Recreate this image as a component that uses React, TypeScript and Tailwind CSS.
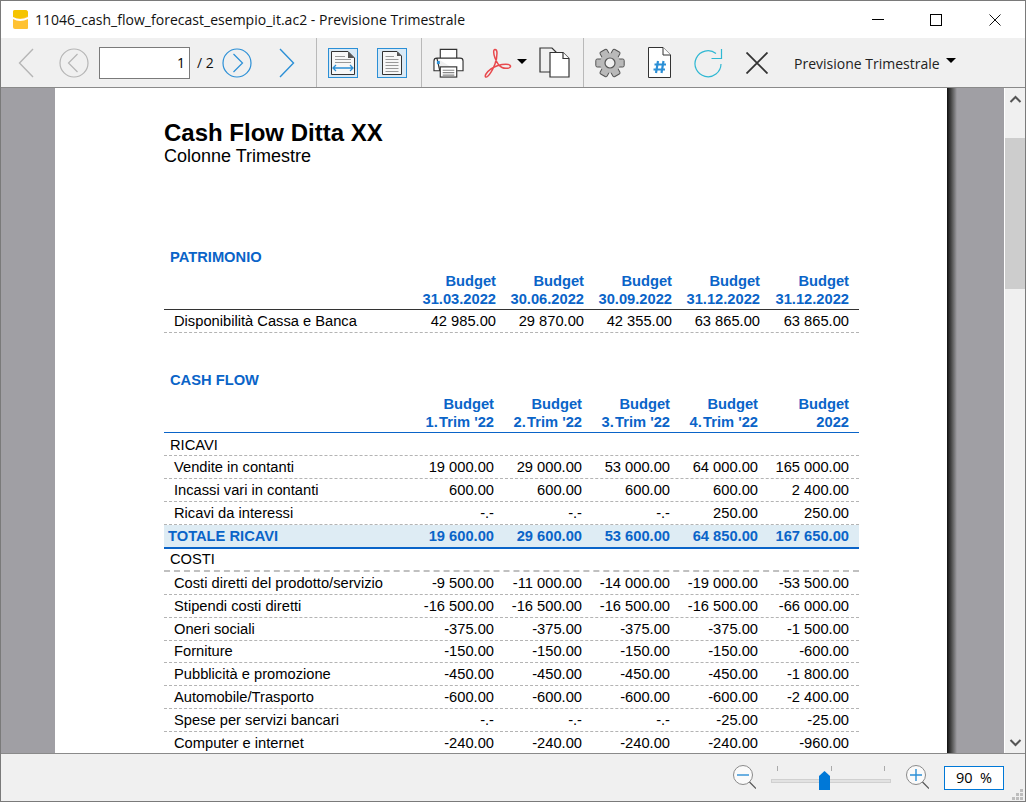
import React from "react";

function Chevron({ dir, color, className }: { dir: "l" | "r"; color: string; className: string }) {
  return (
    <svg width="16" height="30" viewBox="0 0 16 30" className={className} fill="none" stroke={color} strokeWidth="1.4">
      <path d={dir === "l" ? "M15 1 L1.5 15 L15 29" : "M1 1 L14.5 15 L1 29"} />
    </svg>
  );
}

function CircleChev({ dir, color, className }: { dir: "l" | "r"; color: string; className: string }) {
  return (
    <svg width="30" height="30" viewBox="0 0 30 30" className={className} fill="none" stroke={color} strokeWidth="1.2">
      <circle cx="15" cy="15" r="14" />
      <path d={dir === "l" ? "M18.5 6 L9.5 15 L18.5 24" : "M11.5 6 L20.5 15 L11.5 24"} />
    </svg>
  );
}

function Sep({ className }: { className: string }) {
  return <div className={`w-px self-stretch bg-[#b9b9b9] ${className}`} />;
}

function Logo() {
  return (
    <svg width="17" height="21" viewBox="0 0 17 21" className="ml-[11px] shrink-0">
      <path d="M1 3 Q1 1 3 1 L13 1 Q16 1 16 4 L16 19 Q16 20 15 20 L3 20 Q1 20 1 18 Z" fill="#ffc233" />
      <path d="M1 3 Q1 1 3 1 L13 1 Q16 1 16 4 L16 7 Q8 11 1 8 Z" fill="#f5c400" />
      <path d="M1 8 Q8 12 16 8 L16 10 Q8 14 1 10 Z" fill="#ffffff" />
    </svg>
  );
}

function PageFit() {
  return (
    <svg width="30" height="30" viewBox="0 0 30 30" className="ml-[11px] bg-[#d9e9f5]" fill="none">
      <rect x="0.5" y="0.5" width="29" height="29" stroke="#2b8fd6" />
      <path d="M3.5 3.5 H20 L26.5 10 V26.5 H3.5 Z" fill="#f7f7f7" stroke="#333" />
      <path d="M20 3.5 V10 H26.5 Z" fill="#555" />
      <path d="M7 8.5 H17 M7 11.5 H23 M7 14.5 H23" stroke="#999" />
      <path d="M5 20 H25 M8 17 L5 20 L8 23 M22 17 L25 20 L22 23" stroke="#2b8fd6" strokeWidth="1.3" />
    </svg>
  );
}

function PageFull() {
  return (
    <svg width="30" height="30" viewBox="0 0 30 30" className="ml-[19px] bg-[#d9e9f5]" fill="none">
      <rect x="0.5" y="0.5" width="29" height="29" stroke="#2b8fd6" />
      <path d="M5.5 3.5 H20 L24.5 8 V26.5 H5.5 Z" fill="#f7f7f7" stroke="#333" />
      <path d="M20 3.5 V8 H24.5 Z" fill="#555" />
      <path d="M8.5 8.5 H17 M8.5 11.5 H21.5 M8.5 14.5 H21.5 M8.5 17.5 H21.5 M8.5 20.5 H21.5 M8.5 23.5 H21.5" stroke="#999" />
    </svg>
  );
}

function Printer() {
  return (
    <svg width="31" height="30" viewBox="0 0 32 30" className="ml-[11px]" fill="none" stroke="#333" strokeWidth="1.2">
      <path d="M7.5 10 V1 H24.5 V10" fill="#fff" />
      <path d="M4 10 H28 Q31 10 31 13 V23 H25 M7 23 H1 V13 Q1 10 4 10 Z" fill="#fff" />
      <rect x="7.5" y="19" width="17" height="10.5" fill="#fff" />
      <path d="M10 22.5 H22 M10 25 H22 M10 27.5 H22" stroke="#888" />
      <rect x="4" y="13" width="3" height="3" fill="#2b8fd6" stroke="none" />
    </svg>
  );
}

function Pdf() {
  return (
    <svg width="28" height="30" viewBox="0 0 28 30" className="ml-[20px]" fill="none" stroke="#e8494d" strokeWidth="1.5">
      <path d="M11 1.5 C9 1.5 9.5 6 11 10 C12.5 14 15 18 18 19.5 C21 21 27 20.5 26.5 18 C26 15.5 19 16 14 17.5 C9 19 4 23 2 26 C0.5 28.5 1.5 30 3.5 28.5 C6 26.5 9 21 11 16 C12.5 12 13 8 13 5 C13 3 12.5 1.5 11 1.5 Z" />
    </svg>
  );
}

function Caret({ className }: { className: string }) {
  return <div className={`w-0 h-0 border-x-[5px] border-x-transparent border-t-[5px] border-t-black ${className}`} />;
}

function Copy() {
  return (
    <svg width="31" height="31" viewBox="0 0 31 31" className="ml-[12px]" fill="none" stroke="#333" strokeWidth="1.2">
      <path d="M1 1 H13 L17 5 V25 H1 Z" fill="#f0f0f0" />
      <path d="M11 5.5 H24 L30 11.5 V30 H11 Z" fill="#fff" />
      <path d="M24 5.5 V11.5 H30" fill="#fff" />
    </svg>
  );
}

function Gear() {
  const teeth = [30, 90, 150, 210, 270, 330];
  return (
    <svg width="30" height="30" viewBox="0 0 30 30" className="ml-[11px]">
      {teeth.map((a) => (
        <rect key={a} x="11" y="0.8" width="8" height="7" rx="1.5" fill="#b9b9b9" stroke="#555" strokeWidth="1" transform={`rotate(${a} 15 15)`} />
      ))}
      <circle cx="15" cy="15" r="10" fill="#b9b9b9" />
      <circle cx="15" cy="15" r="5" fill="#f0f0f0" stroke="#555" strokeWidth="1.2" />
    </svg>
  );
}

function HashDoc() {
  return (
    <svg width="23" height="31" viewBox="0 0 23 31" className="ml-[23px]" fill="none">
      <path d="M0.5 0.5 H15 L22.5 8 V30.5 H0.5 Z" fill="#fff" stroke="#333" />
      <path d="M15 0.5 V8 H22.5" fill="#fff" stroke="#333" />
      <path d="M10 14 L8 26 M15.5 14 L13.5 26 M6.5 17.5 H18 M5.5 22.5 H17" stroke="#2b8fd6" strokeWidth="2.2" />
    </svg>
  );
}

function Refresh() {
  return (
    <svg width="29" height="30" viewBox="0 0 29 30" className="ml-[23px]" fill="none" stroke="#2fb8d3" strokeWidth="1.2">
      <path d="M27 16 A13 13 0 1 1 22 5.5" />
      <path d="M27.5 1 V10.5 H17.5" />
    </svg>
  );
}

function Cross({ s, w, color, className }: { s: number; w: number; color: string; className: string }) {
  return (
    <svg width={s} height={s} viewBox={`0 0 ${s} ${s}`} className={className} stroke={color} strokeWidth={w}>
      <path d={`M0.5 0.5 L${s - 0.5} ${s - 0.5} M${s - 0.5} 0.5 L0.5 ${s - 0.5}`} />
    </svg>
  );
}

function TitleBar() {
  return (
    <div className="h-[37px] bg-white flex items-center shrink-0">
      <Logo />
      <span className="ml-[6px] text-[14px] text-[#111] whitespace-nowrap font-['Open_Sans',sans-serif] tracking-[0.02px]">
        11046_cash_flow_forecast_esempio_it.ac2 - Previsione Trimestrale
      </span>
      <div className="ml-auto flex items-center">
        <div className="w-3 h-px bg-black" />
        <div className="ml-[46px] w-[12px] h-[12px] border border-black" />
        <Cross s={12} w={1} color="#111" className="ml-[47px] mr-[24px]" />
      </div>
    </div>
  );
}

function Toolbar() {
  return (
    <div className="h-[50px] shrink-0 bg-[#f0f0f0] border-b border-[#8a8a8a] flex items-center">
      <Chevron dir="l" color="#b5b5b5" className="ml-[17px]" />
      <CircleChev dir="l" color="#b5b5b5" className="ml-[25px]" />
      <div className="ml-[10px] w-[91px] h-8 bg-white border border-[#7a7a7a] flex items-center justify-end pr-1 text-[14px] text-black font-['Open_Sans',sans-serif]">
        1
      </div>
      <span className="ml-[7px] w-[18px] whitespace-nowrap text-[14px] text-[#111] font-['Open_Sans',sans-serif]">/ 2</span>
      <CircleChev dir="r" color="#2b8fd6" className="ml-[7px]" />
      <Chevron dir="r" color="#2b8fd6" className="ml-[27px]" />
      <Sep className="ml-[21px]" />
      <PageFit />
      <PageFull />
      <Sep className="ml-[14px]" />
      <Printer />
      <Pdf />
      <Caret className="ml-[5px] -mt-[3px]" />
      <Copy />
      <Sep className="ml-[13px]" />
      <Gear />
      <HashDoc />
      <Refresh />
      <Cross s={22} w={1.8} color="#333" className="ml-[23px]" />
      <span className="ml-[26px] w-[144px] mt-[2px] whitespace-nowrap text-[14px] text-[#222] font-['Open_Sans',sans-serif]">Previsione Trimestrale</span>
      <Caret className="ml-[8px] -mt-1" />
    </div>
  );
}

function Cells({ vals }: { vals: string[] }) {
  return (
    <>
      {vals.map((v, i) => (
        <div key={i} className={`text-right whitespace-nowrap ${i === 4 ? "w-[91px]" : "w-[88px]"}`}>
          {v}
        </div>
      ))}
    </>
  );
}

function Cells1({ vals }: { vals: string[] }) {
  return (
    <>
      {vals.map((v, i) => (
        <div key={i} className={`text-right whitespace-nowrap ${i === 4 ? "w-[89px]" : "w-[88px]"}`}>
          {v}
        </div>
      ))}
    </>
  );
}

function Row({ label, vals, fine }: { label: string; vals: string[]; fine?: boolean }) {
  return (
    <div className={`flex items-center border-b border-dashed border-[#b4b4b4] text-black ${fine ? "h-[22.85px]" : "h-[23px]"}`}>
      <div className="w-[242px] pl-[10px] whitespace-nowrap">{label}</div>
      <Cells vals={vals} />
    </div>
  );
}

const costs: [string, string[]][] = [
  ["Costi diretti del prodotto/servizio", ["-9 500.00", "-11 000.00", "-14 000.00", "-19 000.00", "-53 500.00"]],
  ["Stipendi costi diretti", ["-16 500.00", "-16 500.00", "-16 500.00", "-16 500.00", "-66 000.00"]],
  ["Oneri sociali", ["-375.00", "-375.00", "-375.00", "-375.00", "-1 500.00"]],
  ["Forniture", ["-150.00", "-150.00", "-150.00", "-150.00", "-600.00"]],
  ["Pubblicità e promozione", ["-450.00", "-450.00", "-450.00", "-450.00", "-1 800.00"]],
  ["Automobile/Trasporto", ["-600.00", "-600.00", "-600.00", "-600.00", "-2 400.00"]],
  ["Spese per servizi bancari", ["-.-", "-.-", "-.-", "-25.00", "-25.00"]],
  ["Computer e internet", ["-240.00", "-240.00", "-240.00", "-240.00", "-960.00"]],
];

function Report() {
  return (
    <div className="w-[892px] h-full bg-white shrink-0 overflow-hidden pl-[109px] pt-[32px] font-['Liberation_Sans',Arial,sans-serif] text-[14.7px] leading-[18px]">
      <div className="text-[24px] leading-[26px] font-bold text-black">Cash Flow Ditta XX</div>
      <div className="text-[18px] leading-[20px] text-black">Colonne Trimestre</div>

      <div className="w-[695px] mt-[82px]">
        <div className="pl-[6px] h-[18px] font-bold text-[#0a64c8]">PATRIMONIO</div>
        <div className="mt-[6px] flex font-bold text-[#0a64c8]">
          <div className="w-[244px]" />
          <Cells1 vals={["Budget", "Budget", "Budget", "Budget", "Budget"]} />
        </div>
        <div className="flex font-bold text-[#0a64c8] border-b border-[#333] h-[20px]">
          <div className="w-[244px]" />
          <Cells1 vals={["31.03.2022", "30.06.2022", "30.09.2022", "31.12.2022", "31.12.2022"]} />
        </div>
        <div className="h-[23px] flex items-center border-b border-dashed border-[#b4b4b4] text-black">
          <div className="w-[244px] pl-[10px] whitespace-nowrap">Disponibilità Cassa e Banca</div>
          <Cells1 vals={["42 985.00", "29 870.00", "42 355.00", "63 865.00", "63 865.00"]} />
        </div>

        <div className="mt-[38px] pl-[6px] h-[18px] font-bold text-[#0a64c8]">CASH FLOW</div>
        <div className="mt-[6px] flex font-bold text-[#0a64c8]">
          <div className="w-[242px]" />
          <Cells vals={["Budget", "Budget", "Budget", "Budget", "Budget"]} />
        </div>
        <div className="flex font-bold text-[#0a64c8] h-[20px] border-b border-[#0a64c8]">
          <div className="w-[242px]" />
          <Cells vals={["1.\u200ATrim '22", "2.\u200ATrim '22", "3.\u200ATrim '22", "4.\u200ATrim '22", "2022"]} />
        </div>

        <div className="h-[23px] flex items-center pl-[6px] pt-[2px] border-b border-dashed border-[#b4b4b4] text-black">RICAVI</div>
        <Row label="Vendite in contanti" vals={["19 000.00", "29 000.00", "53 000.00", "64 000.00", "165 000.00"]} />
        <Row label="Incassi vari in contanti" vals={["600.00", "600.00", "600.00", "600.00", "2 400.00"]} />
        <Row label="Ricavi da interessi" vals={["-.-", "-.-", "-.-", "250.00", "250.00"]} />
        <div className="h-[24px] flex items-center bg-[#deecf4] border-b-2 border-[#0a64c8] font-bold text-[#0a64c8]">
          <div className="w-[242px] pl-[4px] whitespace-nowrap">TOTALE RICAVI</div>
          <Cells vals={["19 600.00", "29 600.00", "53 600.00", "64 850.00", "167 650.00"]} />
        </div>
        <div className="h-[23px] flex items-center pl-[6px] pb-[2px] border-b-2 border-dashed border-[#c0c0c0] text-black">COSTI</div>
        {costs.map(([l, v]) => (
          <Row key={l} label={l} vals={v} fine />
        ))}
      </div>
    </div>
  );
}

function Scrollbar() {
  return (
    <div className="w-[21px] h-full bg-[#f0f0f0] border-l border-white flex flex-col items-center shrink-0">
      <svg width="15" height="10" viewBox="0 0 15 10" className="mt-[6px]" fill="none" stroke="#555" strokeWidth="2">
        <path d="M2.5 8 L7.5 3 L12.5 8" />
      </svg>
      <div className="mt-[34px] w-full h-[151px] bg-[#cdcdcd]" />
      <svg width="15" height="10" viewBox="0 0 15 10" className="mt-auto mb-[5px]" fill="none" stroke="#555" strokeWidth="2">
        <path d="M2.5 2 L7.5 7 L12.5 2" />
      </svg>
    </div>
  );
}

function Magnifier({ plus, className }: { plus?: boolean; className: string }) {
  return (
    <svg width="23" height="24" viewBox="0 0 23 24" className={className} fill="none">
      <circle cx="10" cy="10" r="9.5" fill="#fafafa" stroke="#8a8a8a" />
      <path d="M16.5 17 L23 23.5" stroke="#555" strokeWidth="1.2" />
      <path d={plus ? "M4 10 H16 M10 4 V16" : "M4 10 H16"} stroke="#2b8fd6" strokeWidth="1.4" />
    </svg>
  );
}

function StatusBar() {
  return (
    <div className="h-[48px] shrink-0 bg-[#f0f0f0] border-t border-[#8a8a8a] flex items-center relative">
      <Magnifier className="ml-[732px] mt-[-1px]" />
      <div className="ml-[15px] w-[120px] h-6 relative">
        <div className="absolute left-[6px] top-0 w-px h-[5px] bg-[#aaa]" />
        <div className="absolute left-[60px] top-0 w-px h-[5px] bg-[#aaa]" />
        <div className="absolute left-[113px] top-0 w-px h-[5px] bg-[#aaa]" />
        <div className="absolute left-0 top-[13px] w-full h-[4px] bg-[#e2e2e2] border border-[#d0d0d0]" />
        <svg width="11" height="19" viewBox="0 0 11 19" className="absolute left-[48px] top-[5px]">
          <path d="M0 5 L5.5 0 L11 5 V19 H0 Z" fill="#0078d7" />
        </svg>
      </div>
      <Magnifier plus className="ml-[15px] mt-[-1px]" />
      <div className="ml-[15px] w-[60px] h-6 bg-white border border-[#0078d7] flex items-center justify-center text-[14.5px] text-black whitespace-pre font-['Open_Sans',sans-serif]">
        90  %
      </div>
      <svg width="12" height="12" viewBox="0 0 12 12" className="absolute right-[1px] bottom-0" fill="#bdbdbd">
        <rect x="8" y="0" width="3" height="3" />
        <rect x="4" y="4" width="3" height="3" />
        <rect x="8" y="4" width="3" height="3" />
        <rect x="0" y="8" width="3" height="3" />
        <rect x="4" y="8" width="3" height="3" />
        <rect x="8" y="8" width="3" height="3" />
      </svg>
    </div>
  );
}

export default function App() {
  return (
    <div className="w-[1026px] h-[802px] border border-[#7a7a7a] bg-white flex flex-col overflow-hidden">
      <TitleBar />
      <Toolbar />
      <div className="flex-1 min-h-0 flex bg-[#a09fa4]">
        <div className="w-[54px] shrink-0" />
        <Report />
        <div className="w-[10px] h-full shrink-0 bg-gradient-to-r from-[#111] via-[#555] to-[#a09fa4]" />
        <div className="flex-1" />
        <Scrollbar />
      </div>
      <StatusBar />
    </div>
  );
}
